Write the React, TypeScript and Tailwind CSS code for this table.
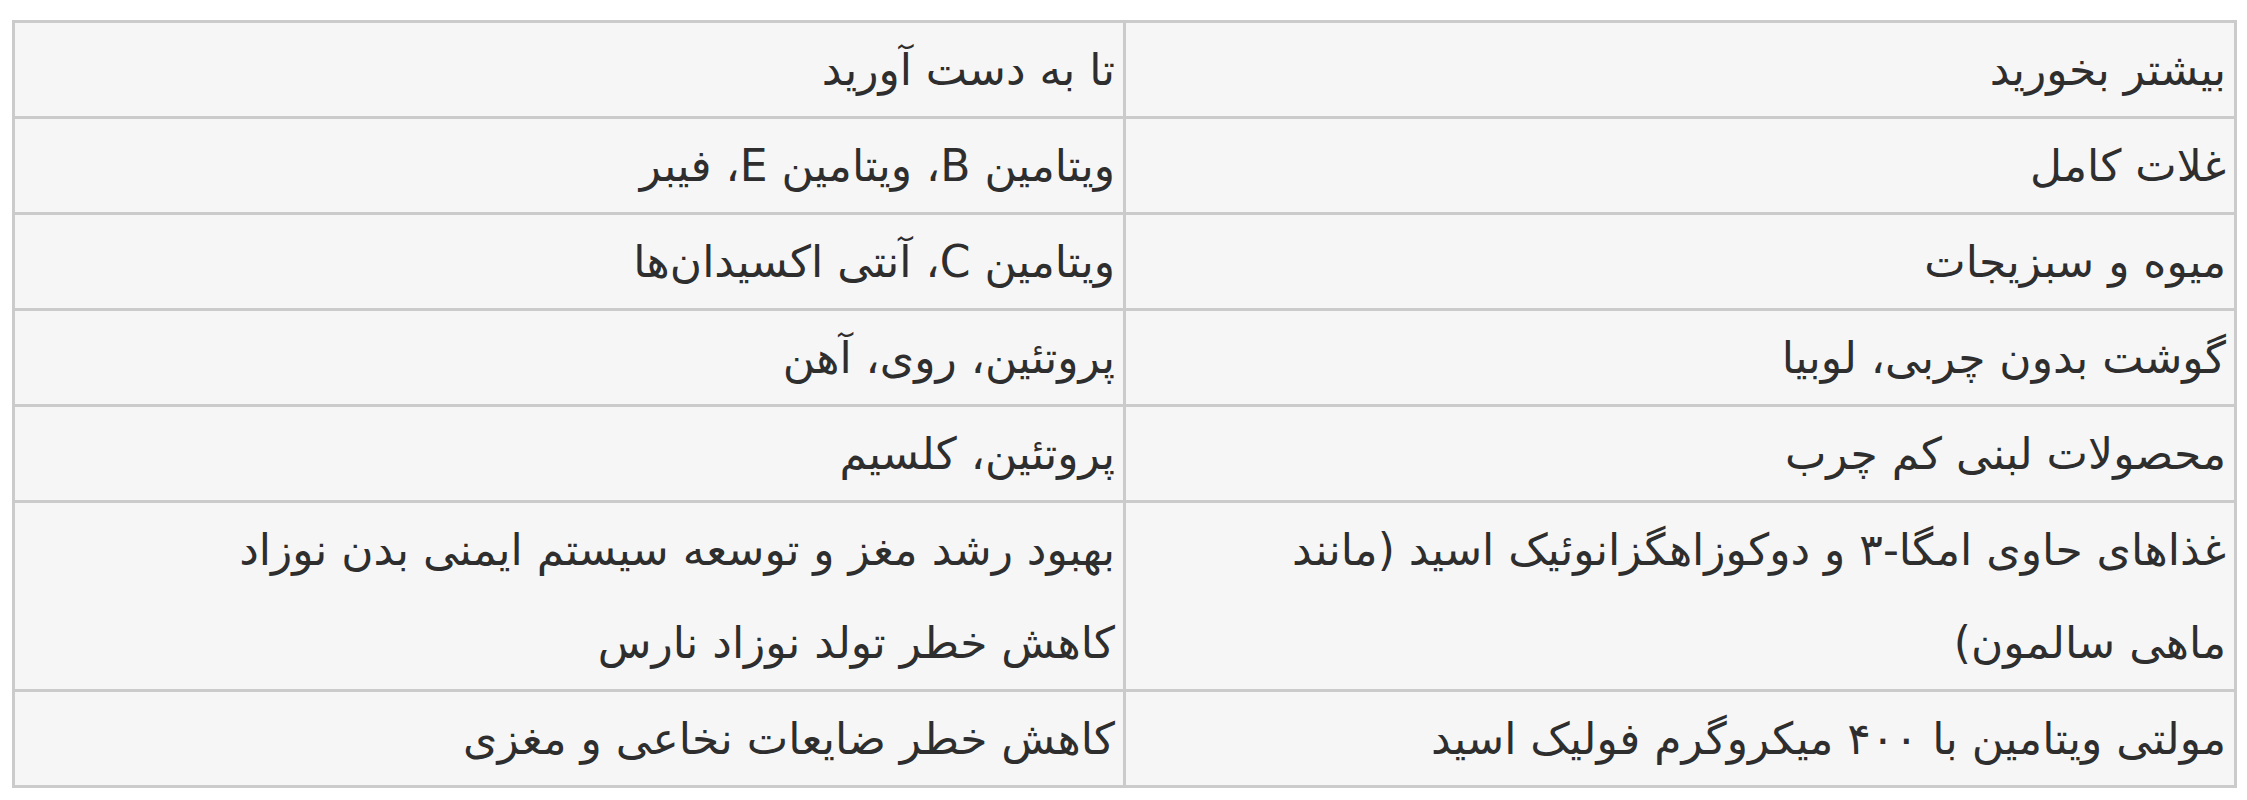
const rows: [string[], string[]][] = [
  [['غلات کامل'], ['ویتامین B، ویتامین E، فیبر']],
  [['میوه و سبزیجات'], ['ویتامین C، آنتی اکسیدان‌ها']],
  [['گوشت بدون چربی، لوبیا'], ['پروتئین، روی، آهن']],
  [['محصولات لبنی کم چرب'], ['پروتئین، کلسیم']],
  [
    ['غذاهای حاوی امگا-۳ و دوکوزاهگزانوئیک اسید (مانند', 'ماهی سالمون)'],
    ['بهبود رشد مغز و توسعه سیستم ایمنی بدن نوزاد', 'کاهش خطر تولد نوزاد نارس'],
  ],
  [['مولتی ویتامین با ۴۰۰ میکروگرم فولیک اسید'], ['کاهش خطر ضایعات نخاعی و مغزی']],
]

const cell =
  'border-[3px] border-[#cbcbcb] px-[8px] py-0 align-top text-right font-normal'

export default function App() {
  return (
    <div className="min-h-[800px] bg-white pl-[12px] pt-[20px] pr-[12px]">
      <table
        dir="rtl"
        className="w-[2225px] table-fixed border-collapse bg-[#f6f6f6] text-[44px] leading-[93px] text-[#2e2e2e] [font-family:'DejaVu_Sans',sans-serif]"
      >
        <thead>
          <tr>
            <th className={`${cell} w-1/2`}>بیشتر بخورید</th>
            <th className={`${cell} w-1/2`}>تا به دست آورید</th>
          </tr>
        </thead>
        <tbody>
          {rows.map(([food, benefits], r) => (
            <tr key={r}>
              <td className={cell}>
                {food.map((f, i) => (
                  <div key={i}>{f}</div>
                ))}
              </td>
              <td className={cell}>
                {benefits.map((b, i) => (
                  <div key={i}>{b}</div>
                ))}
              </td>
            </tr>
          ))}
        </tbody>
      </table>
    </div>
  )
}
